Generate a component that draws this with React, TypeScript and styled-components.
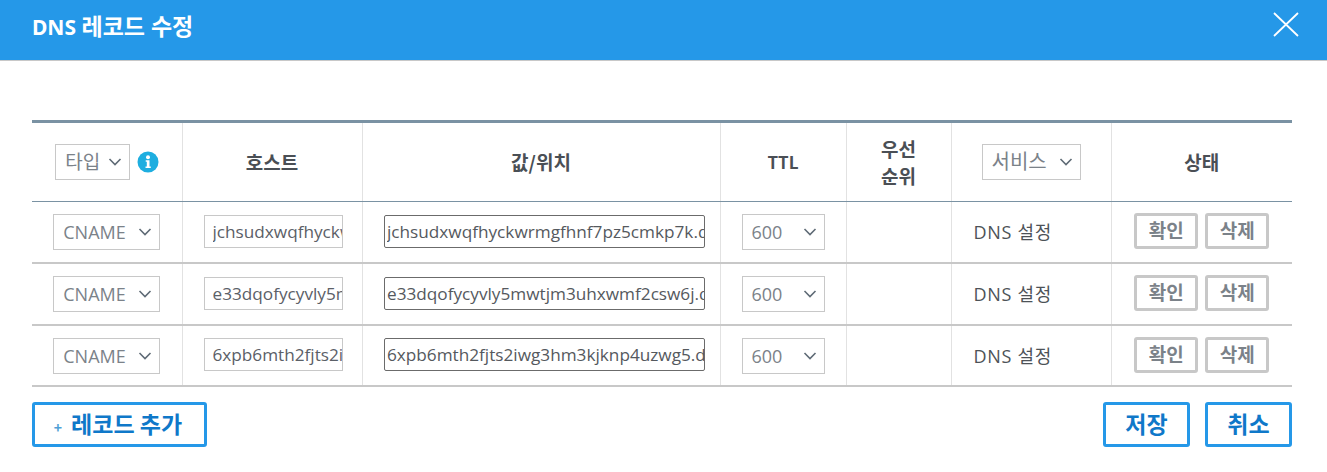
import styled, { createGlobalStyle } from "styled-components";

const colors = {
  blue: "#2598e8",
  blueText: "#0f78c9",
  slate: "#7a92a3",
  rowLine: "#c8c8c8",
  cellLine: "#e2e2e2",
  text: "#4a4f55",
  muted: "#7b8289",
};

const GlobalStyle = createGlobalStyle`
  html, body {
    margin: 0;
    background: #fff;
    font-family: "Open Sans", "Noto Sans CJK KR", sans-serif;
    color: ${colors.text};
  }
`;

const Header = styled.header`
  height: 52px;
  background: ${colors.blue};
  border-bottom: 1px solid ${colors.rowLine};
  display: flex;
  align-items: center;
  justify-content: space-between;
  padding: 0 28px 8px 32px;
  margin-bottom: 59px;
`;

const Title = styled.h1`
  margin: 0;
  color: #fff;
  font-family: "Noto Sans", "Noto Sans CJK KR", sans-serif;
  font-size: 21px;
  font-weight: 700;
  line-height: 36px;
`;

const TitleHangul = styled.span`
  font-size: 23px;
`;

const Close = styled.button`
  border: 0;
  background: none;
  padding: 0;
  color: #fff;
  display: flex;
  margin-bottom: 4px;
  svg {
    display: block;
  }
`;

const Body = styled.main`
  padding: 0 35px 0 32px;
`;

const Table = styled.table`
  width: 1260px;
  table-layout: fixed;
  border-collapse: collapse;
  border-top: 3px solid ${colors.slate};
`;

const Th = styled.th<{ $latin?: boolean }>`
  height: 80px;
  padding: 0 0 1px;
  box-sizing: border-box;
  border-left: 1px solid ${colors.cellLine};
  border-bottom: 1px solid ${colors.slate};
  font-family: "Noto Sans CJK KR", sans-serif;
  font-size: ${({ $latin }) => ($latin ? 17 : 19)}px;
  font-weight: 700;
  line-height: 27px;
  color: ${colors.text};
  text-align: center;
  vertical-align: middle;
  &:first-child {
    border-left: 0;
  }
`;

const Td = styled.td`
  height: 60px;
  padding: 0;
  border-left: 1px solid ${colors.cellLine};
  border-bottom: 2px solid ${colors.rowLine};
  text-align: center;
  vertical-align: middle;
  &:first-child {
    border-left: 0;
  }
  tr:last-child > & {
    height: 59px;
  }
`;

const TypeHead = styled.div`
  display: flex;
  align-items: center;
  justify-content: center;
  gap: 7px;
  padding-left: 1px;
`;

const Select = styled.select<{ $width: number; $size?: number }>`
  appearance: none;
  box-sizing: border-box;
  width: ${({ $width }) => $width}px;
  height: 36px;
  padding: 0 0 0 9px;
  border: 1px solid ${colors.rowLine};
  border-radius: 0;
  background-color: #fff;
  background-image: url("data:image/svg+xml,%3Csvg xmlns='http://www.w3.org/2000/svg' width='14' height='8' viewBox='0 0 14 8'%3E%3Cpath d='M1.5 1l5.500 5.500L12.500 1' fill='none' stroke='%235f6b76' stroke-width='1.600'/%3E%3C/svg%3E");
  background-repeat: no-repeat;
  background-position: right 7px center;
  font-family: "Open Sans", "Noto Sans CJK KR", sans-serif;
  font-size: ${({ $size }) => $size ?? 18}px;
  font-weight: 400;
  color: ${colors.muted};
  vertical-align: middle;
`;

const HostInput = styled.input`
  box-sizing: border-box;
  width: 139px;
  height: 33px;
  margin: 0 0 2px 2px;
  padding: 0 0 0 8px;
  border: 1px solid ${colors.rowLine};
  background: #fff;
  font-family: "Open Sans", sans-serif;
  font-size: 17.2px;
  color: #5b6067;
  vertical-align: middle;
`;

const ValueInput = styled.input`
  box-sizing: border-box;
  width: 321px;
  height: 33px;
  margin: 0 0 2px 7px;
  padding: 0 0 0 2px;
  border: 1px solid #6b6b6b;
  border-radius: 2px;
  background: #fff;
  font-family: "Open Sans", sans-serif;
  font-size: 17.2px;
  color: #55595e;
  vertical-align: middle;
`;

const ServiceLabel = styled.div`
  padding: 0 0 2px 22px;
  text-align: left;
  font-family: "Open Sans", "Noto Sans CJK KR", sans-serif;
  font-size: 18px;
  letter-spacing: 0.7px;
  color: #4d5257;
`;

const Actions = styled.div`
  display: flex;
  justify-content: center;
  gap: 7px;
  padding-bottom: 2px;
`;

const RowButton = styled.button`
  box-sizing: border-box;
  width: 64px;
  height: 36px;
  padding: 0 0 4px;
  border: 3px solid ${colors.rowLine};
  border-radius: 3px;
  background: #fff;
  font-family: "Noto Sans CJK KR", sans-serif;
  font-size: 19px;
  font-weight: 700;
  color: ${colors.muted};
`;

const Footer = styled.div`
  display: flex;
  justify-content: space-between;
  margin-top: 15px;
`;

const FooterRight = styled.div`
  display: flex;
  gap: 15px;
`;

const OutlineButton = styled.button<{ $width: number }>`
  box-sizing: border-box;
  width: ${({ $width }) => $width}px;
  height: 45px;
  padding: 0 0 3px;
  border: 3px solid ${colors.blue};
  border-radius: 3px;
  background: #fff;
  font-family: "Noto Sans CJK KR", sans-serif;
  font-size: 23px;
  font-weight: 700;
  color: ${colors.blueText};
`;

const Plus = styled.span`
  font-size: 14px;
  margin-right: 9px;
  margin-left: -3px;
  color: #4f9fd6;
`;

const InfoIcon = () => (
  <svg width="22" height="22" viewBox="0 0 22 22">
    <circle cx="11" cy="11" r="10.5" fill="#1eaee0" />
    <circle cx="11" cy="6.200" r="2" fill="#fff" />
    <path d="M8.700 9.200h3.800v6.300h1.300v1.600H8.500v-1.600h1.300v-4.700H8.700z" fill="#fff" />
  </svg>
);

const CloseIcon = () => (
  <svg width="26" height="25" viewBox="0 0 26 25">
    <path d="M1 1l24 23M25 1L1 24" fill="none" stroke="currentColor" strokeWidth="1.800" />
  </svg>
);

const records = [
  "jchsudxwqfhyckwrmgfhnf7pz5cmkp7k.dkim.amazonses.com",
  "e33dqofycyvly5mwtjm3uhxwmf2csw6j.dkim.amazonses.com",
  "6xpb6mth2fjts2iwg3hm3kjknp4uzwg5.dkim.amazonses.com",
];

const columns = [150, 180, 358, 126, 105, 160, 181];

export default function App() {
  return (
    <>
      <GlobalStyle />
      <Header>
        <Title>
          DNS <TitleHangul>레코드 수정</TitleHangul>
        </Title>
        <Close aria-label="닫기">
          <CloseIcon />
        </Close>
      </Header>
      <Body>
        <Table>
          <colgroup>
            {columns.map((width, index) => (
              <col key={index} style={{ width }} />
            ))}
          </colgroup>
          <thead>
            <tr>
              <Th>
                <TypeHead>
                  <Select $width={75} $size={19} defaultValue="타입">
                    <option>타입</option>
                  </Select>
                  <InfoIcon />
                </TypeHead>
              </Th>
              <Th>호스트</Th>
              <Th>값/위치</Th>
              <Th $latin>TTL</Th>
              <Th>
                우선
                <br />
                순위
              </Th>
              <Th>
                <Select $width={99} $size={20} defaultValue="서비스">
                  <option>서비스</option>
                </Select>
              </Th>
              <Th>상태</Th>
            </tr>
          </thead>
          <tbody>
            {records.map((value) => (
              <tr key={value}>
                <Td>
                  <Select $width={107} defaultValue="CNAME">
                    <option>CNAME</option>
                  </Select>
                </Td>
                <Td>
                  <HostInput readOnly value={value} />
                </Td>
                <Td>
                  <ValueInput readOnly value={value} />
                </Td>
                <Td>
                  <Select $width={83} defaultValue="600">
                    <option>600</option>
                  </Select>
                </Td>
                <Td />
                <Td>
                  <ServiceLabel>DNS 설정</ServiceLabel>
                </Td>
                <Td>
                  <Actions>
                    <RowButton>확인</RowButton>
                    <RowButton>삭제</RowButton>
                  </Actions>
                </Td>
              </tr>
            ))}
          </tbody>
        </Table>
        <Footer>
          <OutlineButton $width={175}>
            <Plus>+</Plus>레코드 추가
          </OutlineButton>
          <FooterRight>
            <OutlineButton $width={87}>저장</OutlineButton>
            <OutlineButton $width={87}>취소</OutlineButton>
          </FooterRight>
        </Footer>
      </Body>
    </>
  );
}
